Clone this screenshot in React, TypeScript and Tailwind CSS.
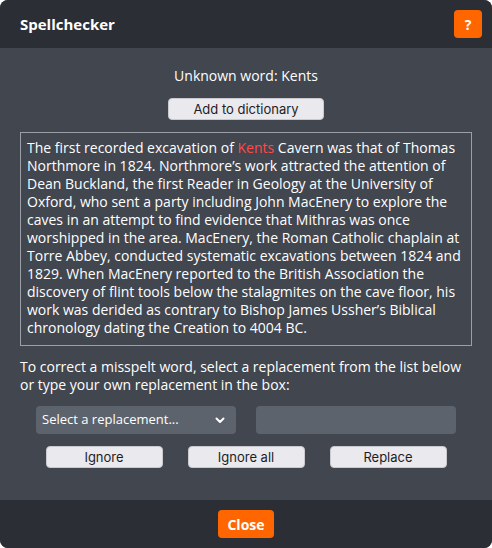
import React from "react";

const body =
  " Cavern was that of Thomas Northmore in 1824. Northmore\u2019s work attracted the attention of Dean Buckland, the first Reader in Geology at the University of Oxford, who sent a party including John MacEnery to explore the caves in an attempt to find evidence that Mithras was once worshipped in the area. MacEnery, the Roman Catholic chaplain at Torre Abbey, conducted systematic excavations between 1824 and 1829. When MacEnery reported to the British Association the discovery of flint tools below the stalagmites on the cave floor, his work was derided as contrary to Bishop James Ussher\u2019s Biblical chronology dating the Creation to 4004 BC.";

function GreyButton({ label, className }: { label: string; className?: string }) {
  return (
    <button
      className={
        "h-[22px] rounded-[4px] border border-[#c9c9cf] bg-[#e9e9ee] text-[13px] leading-none text-[#1d1d1f] " +
        (className ?? "")
      }
      style={{ fontFamily: "Inter, 'Liberation Sans', sans-serif" }}
    >
      {label}
    </button>
  );
}

export default function App() {
  return (
    <div className="h-[548px] w-[492px] bg-white" style={{ fontFamily: "'Open Sans', sans-serif" }}>
      <div className="flex h-full flex-col overflow-hidden rounded-[8px] bg-[#41464f] text-white">
        {/* Header */}
        <div className="flex h-[48px] shrink-0 items-center justify-between bg-[#2b2e35] pl-5 pr-[10px]">
          <span className="text-[15px] font-bold">Spellchecker</span>
          <button className="flex h-[28px] w-[28px] items-center justify-center rounded-[4px] bg-[#ff6600] text-[14px] font-bold text-white">
            ?
          </button>
        </div>

        {/* Body */}
        <div className="flex flex-1 flex-col px-5">
          <p className="mt-[67px] hidden" />
          <p className="pt-[18px] text-center text-[14px] leading-[20px]">Unknown word: Kents</p>
          <div className="mt-[12px] flex justify-center">
            <GreyButton label="Add to dictionary" className="w-[156px]" />
          </div>

          <div className="mt-[12px] h-[214px] border border-[#9ba0a8] px-[6px] pt-[6px] text-[14px] leading-[18px]">
            The first recorded excavation of <span className="text-[#ff4a4a]">Kents</span>
            {body}
          </div>

          <p className="mt-[12px] text-[14px] leading-[18px]">
            To correct a misspelt word, select a replacement from the list below or type your own replacement in the box:
          </p>

          <div className="mt-[12px] flex justify-center gap-5">
            <div className="flex h-[28px] w-[200px] items-center justify-between rounded-[4px] bg-[#5d636d] pl-[6px] pr-[10px] text-[13px]">
              <span>Select a replacement...</span>
              <svg width="12" height="12" viewBox="0 0 24 24" fill="none" stroke="white" strokeWidth="4" strokeLinecap="round" strokeLinejoin="round">
                <path d="M5 9l7 7 7-7" />
              </svg>
            </div>
            <div className="h-[28px] w-[200px] rounded-[4px] bg-[#5d636d]" />
          </div>

          <div className="mt-[12px] flex justify-center gap-[25px]">
            <GreyButton label="Ignore" className="w-[117px]" />
            <GreyButton label="Ignore all" className="w-[117px]" />
            <GreyButton label="Replace" className="w-[117px]" />
          </div>
        </div>

        {/* Footer */}
        <div className="flex h-[48px] shrink-0 items-center justify-center bg-[#2b2e35]">
          <button className="h-[28px] w-[56px] rounded-[4px] bg-[#ff6600] text-[14px] font-bold text-white">
            Close
          </button>
        </div>
      </div>
    </div>
  );
}
